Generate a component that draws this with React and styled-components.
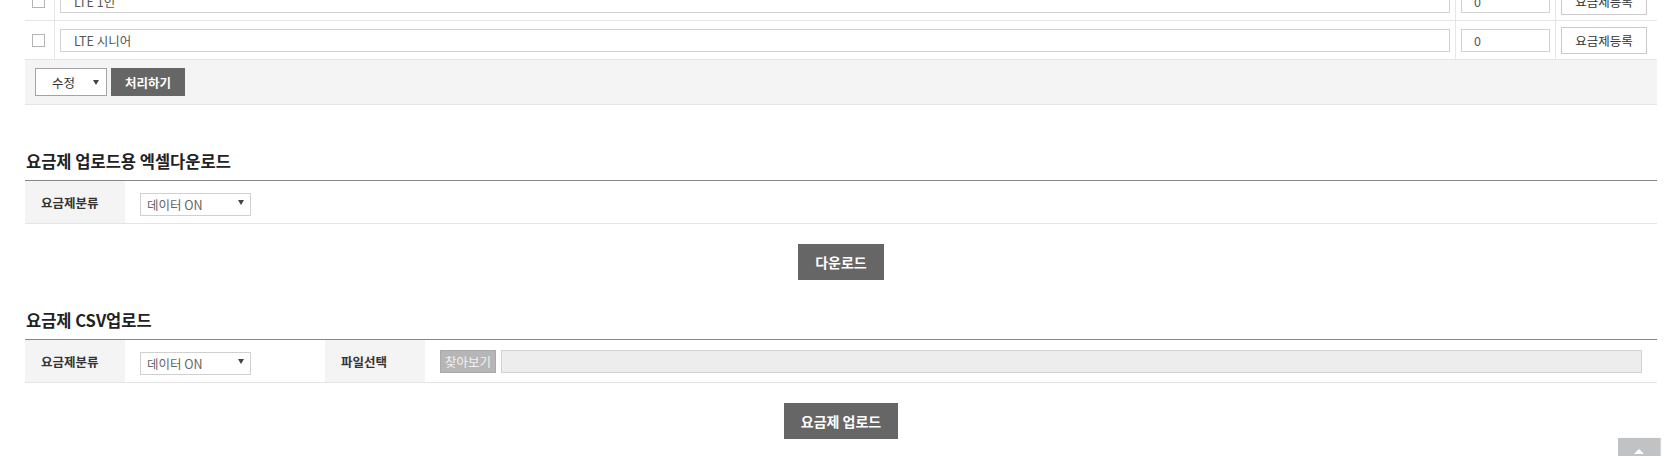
import React from "react";
import styled, { createGlobalStyle } from "styled-components";

const Global = createGlobalStyle`
  html, body { margin: 0; padding: 0; background: #fff; overflow: hidden; }
  body { font-family: "Noto Sans CJK KR", "Noto Sans", sans-serif; color: #333; }
  * { box-sizing: border-box; }
`;

const Page = styled.div`
  padding: 0 18px 0 25px;
`;

const Table = styled.div`
  margin-top: -18px;
`;

const Row = styled.div`
  display: grid;
  grid-template-columns: 29px 1fr 100px 102px;
  height: 39px;
  border-bottom: 1px solid #e6e6e6;
`;

const Cell = styled.div`
  display: flex;
  align-items: center;
  padding: ${(p) => p.$pad || "0 5px"};
  border-left: ${(p) => (p.$first ? "none" : "1px solid #e6e6e6")};
`;

const Check = styled.input.attrs({ type: "checkbox" })`
  appearance: none;
  margin: 0;
  width: 13px;
  height: 13px;
  border: 1px solid #b4b4b4;
  background: #fff;
`;

const TextInput = styled.input`
  width: 100%;
  height: 23px;
  border: 1px solid #d2d2d2;
  background: ${(p) => (p.$disabled ? "#ededed" : "#fff")};
  padding: 0 0 0 ${(p) => p.$indent || 13}px;
  font: 12.5px "Noto Sans CJK KR", sans-serif;
  color: #555;
  outline: none;
`;

const LineButton = styled.button`
  width: 86px;
  height: 27px;
  border: 1px solid #cacaca;
  background: #fff;
  font: 12.5px "Noto Sans CJK KR", sans-serif;
  color: #333;
  padding: 0;
`;

const Footer = styled.div`
  display: flex;
  gap: 4px;
  align-items: center;
  background: #f4f4f4;
  border-bottom: 1px solid #e4e4e4;
  padding: 8px 10px;
`;

const SelectWrap = styled.div`
  position: relative;
  width: ${(p) => p.$w}px;
  height: ${(p) => p.$h}px;
`;

const NativeSelect = styled.select`
  appearance: none;
  width: 100%;
  height: 100%;
  border: 1px solid ${(p) => p.$border};
  background: #fff;
  border-radius: 0;
  padding: 0 0 0 ${(p) => p.$indent}px;
  font: 12.5px "Noto Sans CJK KR", sans-serif;
  color: ${(p) => p.$color};
  outline: none;
`;

const Arrow = styled.span`
  position: absolute;
  right: ${(p) => p.$right}px;
  top: 50%;
  margin-top: -2px;
  width: 0;
  height: 0;
  border-left: 3px solid transparent;
  border-right: 3px solid transparent;
  border-top: 5px solid #444;
  pointer-events: none;
`;

const DarkButton = styled.button`
  height: ${(p) => p.$h}px;
  padding: 0 ${(p) => p.$px}px;
  background: #666;
  border: none;
  color: #fff;
  font: bold ${(p) => p.$fs}px "Noto Sans CJK KR", sans-serif;
`;

const Section = styled.section`
  margin-top: ${(p) => p.$mt}px;
`;

const Title = styled.h3`
  margin: 0;
  font-size: 16.5px;
  font-weight: bold;
  line-height: 20px;
  color: #222;
  padding: 0 0 9px 1px;
  border-bottom: 1px solid #888;
`;

const FormRow = styled.div`
  display: grid;
  grid-template-columns: 100px 200px 100px 1fr;
  height: 43px;
  border-bottom: 1px solid #e4e4e4;
`;

const Label = styled.div`
  display: flex;
  align-items: center;
  padding-left: 16px;
  background: #f4f4f4;
  font-size: 12.5px;
  font-weight: bold;
  color: #333;
`;

const Value = styled.div`
  display: flex;
  align-items: center;
  gap: 5px;
  padding: 0 15px;
`;

const Center = styled.div`
  display: flex;
  justify-content: center;
  padding-top: 20px;
`;

const FileButton = styled.button`
  flex: none;
  width: 56px;
  height: 23px;
  padding: 0;
  background: #b6b6b6;
  border: 1px solid #a9a9a9;
  color: #f2f2f2;
  font: 12.5px "Noto Sans CJK KR", sans-serif;
`;

const TopButton = styled.button`
  position: fixed;
  right: 15px;
  bottom: -24px;
  width: 42px;
  height: 42px;
  border: none;
  background: #c1c2c4;
  box-shadow: 1px 0 1px rgba(0, 0, 0, 0.15);
  padding: 0;
  display: flex;
  justify-content: center;
  align-items: flex-start;
  padding-top: 11px;
`;

const UpTri = styled.span`
  width: 0;
  height: 0;
  border-left: 5px solid transparent;
  border-right: 5px solid transparent;
  border-bottom: 5px solid #fff;
`;

function Select({ w, h, border, color, indent, arrowRight, value }) {
  return (
    <SelectWrap $w={w} $h={h}>
      <NativeSelect $border={border} $color={color} $indent={indent} defaultValue={value}>
        <option>{value}</option>
      </NativeSelect>
      <Arrow $right={arrowRight} />
    </SelectWrap>
  );
}

const plans = [
  { name: "LTE 1인", price: "0" },
  { name: "LTE 시니어", price: "0" },
];

export default function App() {
  return (
    <Page>
      <Global />
      <Table>
        {plans.map((p) => (
          <Row key={p.name}>
            <Cell $first $pad="0 0 0 7px">
              <Check />
            </Cell>
            <Cell $pad="0 5px 0 5px">
              <TextInput defaultValue={p.name} />
            </Cell>
            <Cell>
              <TextInput defaultValue={p.price} $indent={12} />
            </Cell>
            <Cell>
              <LineButton>요금제등록</LineButton>
            </Cell>
          </Row>
        ))}
        <Footer>
          <Select w={72} h={28} border="#a4a4a4" color="#333" indent={16} arrowRight={8} value="수정" />
          <DarkButton $h={28} $px={14} $fs={12.5}>처리하기</DarkButton>
        </Footer>
      </Table>

      <Section $mt={46}>
        <Title>요금제 업로드용 엑셀다운로드</Title>
        <FormRow>
          <Label>요금제분류</Label>
          <Value>
            <Select w={111} h={23} border="#d0d0d0" color="#666" indent={6} arrowRight={7} value="데이터 ON" />
          </Value>
        </FormRow>
        <Center>
          <DarkButton $h={36} $px={17} $fs={14}>다운로드</DarkButton>
        </Center>
      </Section>

      <Section $mt={30}>
        <Title>요금제 CSV업로드</Title>
        <FormRow>
          <Label>요금제분류</Label>
          <Value>
            <Select w={111} h={23} border="#d0d0d0" color="#666" indent={6} arrowRight={7} value="데이터 ON" />
          </Value>
          <Label>파일선택</Label>
          <Value>
            <FileButton>찾아보기</FileButton>
            <TextInput $disabled readOnly defaultValue="" />
          </Value>
        </FormRow>
        <Center>
          <DarkButton $h={36} $px={17} $fs={14}>요금제 업로드</DarkButton>
        </Center>
      </Section>

      <TopButton aria-label="top">
        <UpTri />
      </TopButton>
    </Page>
  );
}
